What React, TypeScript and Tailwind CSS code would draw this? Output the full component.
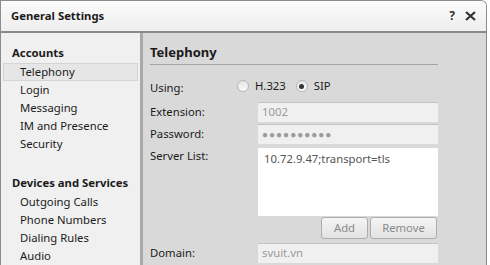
const accounts = ["Telephony", "Login", "Messaging", "IM and Presence", "Security"];
const devices = ["Outgoing Calls", "Phone Numbers", "Dialing Rules", "Audio"];

function Radio({ checked, label }: { checked?: boolean; label: string }) {
    return (
        <div className="flex items-center gap-[6px]">
            <span className="flex h-[12px] w-[12px] items-center justify-center rounded-full border border-[#b5b5b5] bg-gradient-to-b from-[#e6e6e6] to-[#fafafa]">
                {checked && <span className="h-[5px] w-[5px] rounded-full bg-[#333]" />}
            </span>
            <span>{label}</span>
        </div>
    );
}

function Field({ label, value, dots }: { label: string; value: string; dots?: boolean }) {
    return (
        <div className="flex h-[20px] items-center">
            <div className="w-[108px]">{label}</div>
            <div
                className={`flex h-[20px] w-[180px] items-center border-t border-[#c4c4c4] bg-[#f0f0f0] px-[4px] text-[#9a9a9a] ${
                    dots ? "text-[10px] tracking-[1px]" : ""
                }`}
            >
                {value}
            </div>
        </div>
    );
}

export default function App() {
    return (
        <div
            className="h-[265px] w-[490px] bg-white text-[11.3px] text-[#1b1b1b]"
            style={{ fontFamily: '"Noto Sans", "Open Sans", sans-serif' }}
        >
            <div className="flex h-[265px] w-[487px] flex-col overflow-hidden rounded-tr-[6px] border-l border-r border-t border-[#8c8c8c]">
                <div className="flex h-[32px] shrink-0 items-center justify-between border-b-2 border-[#8a8a8a] bg-gradient-to-b from-[#fbfbfb] to-[#eeeeee] pl-[10px] pr-[10px]">
                    <span className="text-[11.3px] font-bold">General Settings</span>
                    <div className="flex items-center gap-[10px] font-bold text-[#333]">
                        <span className="text-[12px]">?</span>
                        <svg width="11" height="10" viewBox="0 0 11 10">
                            <path d="M1 1 L10 9 M10 1 L1 9" stroke="#333" strokeWidth="2.2" />
                        </svg>
                    </div>
                </div>
                <div className="flex flex-1">
                    <div className="w-[142px] shrink-0 border-r-[3px] border-[#a9a9a9] bg-[#f0f0f0] pt-[11px]">
                        <div className="pl-[11px] font-bold leading-[18px]">Accounts</div>
                        <div className="mt-[1px]">
                            {accounts.map((item, i) => (
                                <div
                                    key={item}
                                    className={`mx-[2px] h-[18px] pl-[16px] leading-[16px] ${
                                        i === 0 ? "border border-[#d4d4d4] bg-[#e6e6e6]" : "border border-transparent"
                                    }`}
                                >
                                    {item}
                                </div>
                            ))}
                        </div>
                        <div className="mt-[21px] pl-[11px] font-bold leading-[18px]">Devices and Services</div>
                        <div className="mt-[1px]">
                            {devices.map((item) => (
                                <div key={item} className="mx-[2px] h-[18px] pl-[17px] leading-[18px]">
                                    {item}
                                </div>
                            ))}
                        </div>
                    </div>
                    <div className="flex-1 bg-[#d9d9d9] pl-[7px] pt-[9px]">
                        <div className="w-[288px] border-b border-[#a3a3a3] pb-[2px] text-[13px] font-bold leading-[20px]">
                            Telephony
                        </div>
                        <div className="mt-[13px] flex h-[20px] items-center">
                            <div className="w-[87px]">Using:</div>
                            <div className="flex items-center gap-[10px] pb-[4px]">
                                <Radio label="H.323" />
                                <Radio checked label="SIP" />
                            </div>
                        </div>
                        <div className="mt-[4px] flex flex-col gap-[2px]">
                            <Field label="Extension:" value="1002" />
                            <Field label="Password:" value="●●●●●●●●●●" dots />
                        </div>
                        <div className="mt-[4px] flex">
                            <div className="w-[108px] leading-[16px]">Server List:</div>
                            <div className="h-[68px] w-[180px] bg-white px-[6px] pt-[3px] text-[#555]">
                                10.72.9.47;transport=tls
                            </div>
                        </div>
                        <div className="mt-[1px] flex w-[288px] justify-end gap-[2px] pr-[1px]">
                            <button className="h-[22px] w-[47px] rounded-[3px] border border-[#adadad] bg-gradient-to-b from-[#f5f5f5] to-[#e2e2e2] text-[#8a8a8a]">
                                Add
                            </button>
                            <button className="h-[22px] w-[67px] rounded-[3px] border border-[#adadad] bg-gradient-to-b from-[#f5f5f5] to-[#e2e2e2] text-[#8a8a8a]">
                                Remove
                            </button>
                        </div>
                        <div className="mt-[4px]">
                            <Field label="Domain:" value="svuit.vn" />
                        </div>
                    </div>
                </div>
            </div>
        </div>
    );
}
